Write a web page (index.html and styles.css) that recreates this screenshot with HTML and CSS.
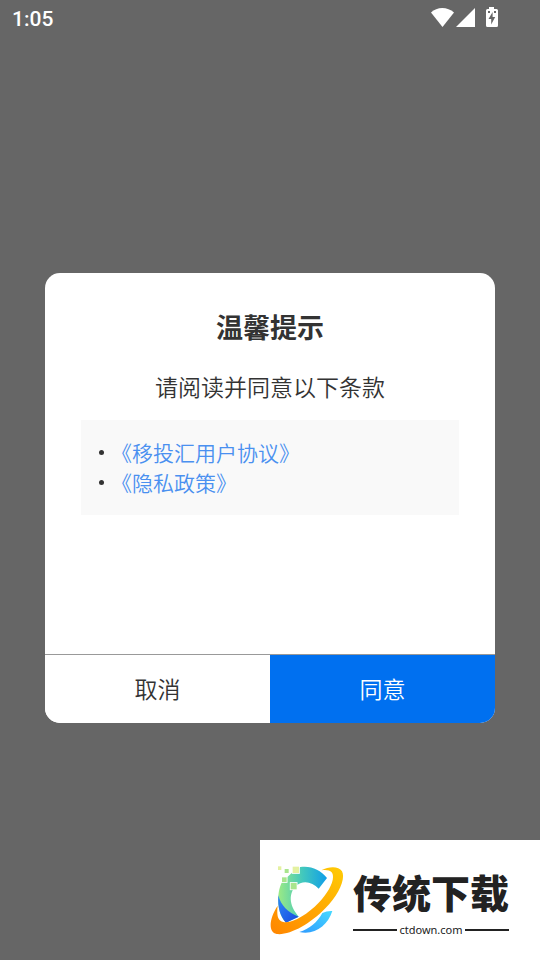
FILE: index.html
```html
<!DOCTYPE html>
<html lang="zh-CN">
<head>
    <meta charset="UTF-8">
    <meta name="viewport" content="width=device-width, initial-scale=1.0">
    <title>温馨提示</title>
    <link rel="stylesheet" href="styles.css">
</head>
<body>
    <header class="status-bar">
        <span class="time">1:05</span>
        <svg class="status-icons" width="68" height="24" viewBox="0 0 68 24" fill="#fff" aria-hidden="true">
            <path d="M1 6.500C7 0.500 17.500 0.500 24 6.500L12.500 21Z"/>
            <path d="M45 2V21H26Z"/>
            <path fill-rule="evenodd" d="M59 1H64V3H66.500Q68 3 68 4.500V19.500Q68 21 66.500 21H57.500Q56 21 56 19.500V4.500Q56 3 57.500 3H59ZM62.600 6L58.500 13H61.200V18.500L65.200 11H62.600ZM58 5V7H60V5ZM64 5V7H66V5Z"/>
        </svg>
    </header>

    <main class="overlay">
        <section class="dialog" role="dialog" aria-labelledby="dialog-title">
            <div class="dialog-body">
                <h1 id="dialog-title">温馨提示</h1>
                <p class="subtitle">请阅读并同意以下条款</p>
                <ul class="terms">
                    <li><a href="#">《移投汇用户协议》</a></li>
                    <li><a href="#">《隐私政策》</a></li>
                </ul>
            </div>
            <div class="actions">
                <button type="button" class="btn">取消</button>
                <button type="button" class="btn btn-primary">同意</button>
            </div>
        </section>
    </main>

    <aside class="watermark">
        <svg class="logo" width="78" height="72" viewBox="38 86 234 216" aria-hidden="true">
            <defs>
                <linearGradient id="ring" x1="0" y1="1" x2="1" y2="0">
                    <stop offset="0" stop-color="#ff8500"/>
                    <stop offset="1" stop-color="#ffcb05"/>
                </linearGradient>
                <linearGradient id="arc" x1="0" y1="0" x2="1" y2="0">
                    <stop offset="0" stop-color="#9cea84"/>
                    <stop offset="0.5" stop-color="#42c8bd"/>
                    <stop offset="1" stop-color="#109ee8"/>
                </linearGradient>
                <linearGradient id="deep" x1="0" y1="0" x2="1" y2="1">
                    <stop offset="0" stop-color="#2f8bf5"/>
                    <stop offset="1" stop-color="#1747e0"/>
                </linearGradient>
                <linearGradient id="tail" x1="0" y1="1" x2="1" y2="0">
                    <stop offset="0" stop-color="#2f9bff"/>
                    <stop offset="1" stop-color="#45d9ff"/>
                </linearGradient>
            </defs>
            <path fill="url(#arc)" d="M135 95C165 90 195 102 215 128L190 160C170 138 140 134 121 153C101 174 99 208 130 244L92 262C65 235 62 175 80 140L110 112Z"/>
            <path fill="url(#deep)" d="M69 180C76 210 98 232 130 244L92 262C75 245 66 215 69 180Z"/>
            <path fill="url(#tail)" d="M132 290C162 281 187 260 201 233Q215 226 231 227C217 270 180 300 132 290Z"/>
            <path fill="url(#ring)" d="M198 105C222 92 250 92 260 108C272 130 249 180 210 219C164 267 102 301 64 296C38 292 41 250 67 211C64 238 66 257 84 260C110 265 157 237 190 202C222 169 242 128 229 111C223 104 211 103 198 105Z"/>
            <g fill="#a9e58d" stroke="#fff" stroke-width="5" paint-order="stroke">
                <rect x="68" y="93" width="10" height="11" fill="#e4f1a0"/>
                <rect x="88" y="101" width="12" height="12"/>
                <rect x="112" y="94" width="19" height="19" fill="#e4f1a0"/>
                <rect x="80" y="126" width="14" height="14"/>
                <rect x="106" y="143" width="18" height="19"/>
            </g>
        </svg>
        <div class="brand">
            <strong class="brand-name">传统下载</strong>
            <span class="brand-url">ctdown.com</span>
        </div>
    </aside>
</body>
</html>
```
FILE: styles.css
```css
* {
    box-sizing: border-box;
}

body {
    margin: 0;
    display: flex;
    flex-direction: column;
    min-height: 100vh;
    background-color: #666;
    color: #333;
    font-family: "Noto Sans CJK SC", sans-serif;
    font-weight: 350;
}

.status-bar {
    display: flex;
    justify-content: space-between;
    align-items: center;
    height: 36px;
    padding: 0 42px 0 12px;
    color: #fff;
}

.time {
    font-family: Roboto, sans-serif;
    font-size: 21px;
    font-weight: 500;
    line-height: 36px;
    padding-top: 2px;
}

.overlay {
    flex: 1;
    display: flex;
    align-items: center;
    padding: 0 45px;
}

.dialog {
    display: flex;
    flex-direction: column;
    width: 100%;
    min-height: 450px;
    background: #fff;
    border-radius: 15px;
    overflow: hidden;
}

.dialog-body {
    flex: 1;
    padding: 36px;
    text-align: center;
}

h1 {
    margin: 0 0 24px;
    font-size: 27px;
    line-height: 36px;
}

.subtitle {
    margin: 0 0 17px;
    font-size: 23px;
    line-height: 34px;
}

.terms {
    margin: 0;
    padding: 17px 18px 18px;
    list-style: none;
    background: #f9f9f9;
    font-size: 21px;
    line-height: 30px;
    text-align: left;
}

.terms li {
    display: flex;
    align-items: center;
    gap: 7px;
}

.terms li::before {
    content: '';
    width: 5px;
    height: 5px;
    border-radius: 50%;
    background: #333;
}

.terms a {
    color: #4a90f0;
    text-decoration: none;
}

.actions {
    display: flex;
    border-top: 1px solid #999;
}

.btn {
    flex: 1;
    height: 68px;
    padding: 0 0 2px;
    border: none;
    background: #fff;
    color: #333;
    font-family: inherit;
    font-size: 23px;
    font-weight: inherit;
    cursor: pointer;
}

.btn-primary {
    background: #0070f0;
    color: #fff;
}

.watermark {
    position: fixed;
    right: 0;
    bottom: 0;
    display: flex;
    align-items: center;
    gap: 7px;
    width: 280px;
    height: 120px;
    padding-left: 8px;
    background: #fff;
    color: #222;
}

.brand {
    display: flex;
    flex-direction: column;
    width: 156px;
    padding-top: 2px;
}

.brand-name {
    font-size: 39px;
    font-weight: 900;
    line-height: 58px;
    white-space: nowrap;
}

.brand-url {
    display: flex;
    align-items: center;
    gap: 2px;
    font-family: "Noto Sans", sans-serif;
    font-size: 11px;
    font-weight: 400;
    line-height: 20px;
}

.brand-url::before,
.brand-url::after {
    content: '';
    flex: 1;
    height: 2px;
    background: #222;
}
```
